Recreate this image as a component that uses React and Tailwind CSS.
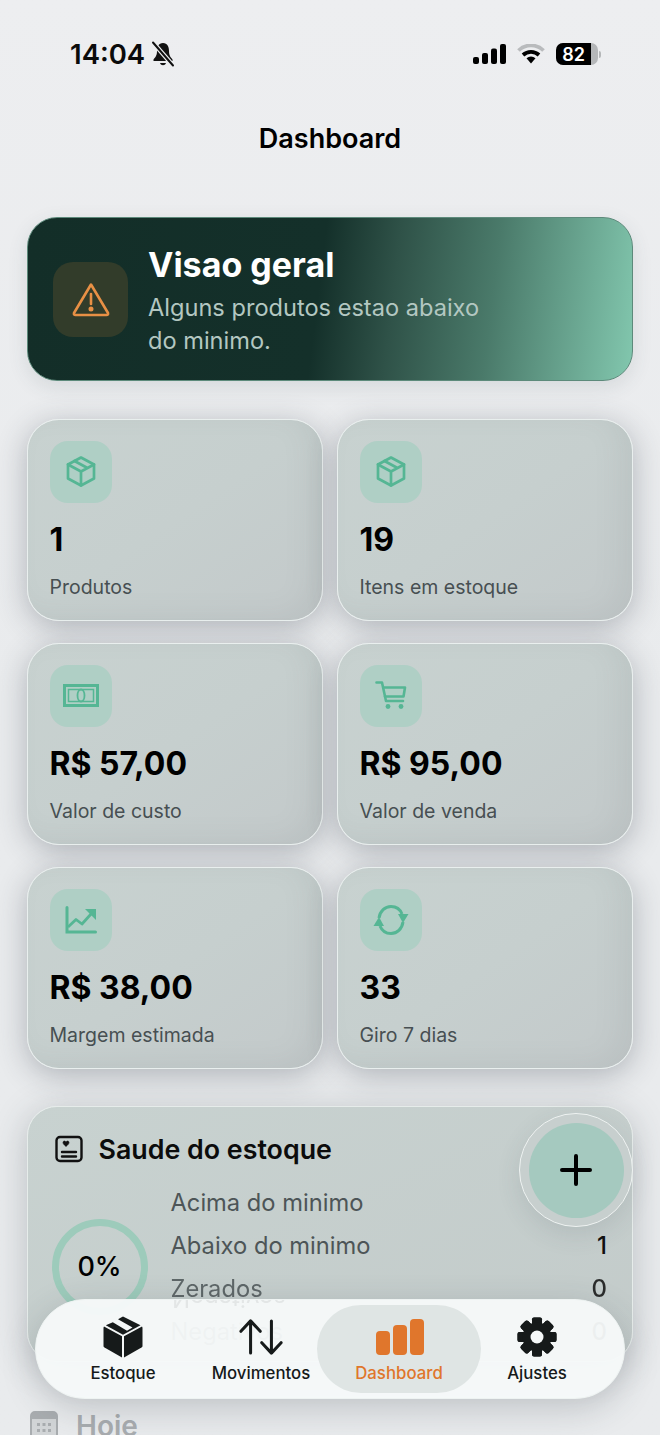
import React from "react";

const G = "#55b694";

function BoxOutline() {
  return (
    <svg width="32" height="33" viewBox="0 0 32 32" fill="none" stroke={G} strokeWidth="2.700" strokeLinejoin="round" strokeLinecap="round">
      <path d="M16 2 L29 9 V23 L16 30 L3 23 V9 Z" />
      <path d="M3 9 L16 16 L29 9 M16 16 V30 M9.500 5.500 L22.500 12.500" />
    </svg>
  );
}
function Money() {
  return (
    <svg width="36" height="23" viewBox="0 0 36 23" fill="none" stroke={G}>
      <rect x="1.500" y="1.500" width="33" height="20" strokeWidth="3" />
      <rect x="5.500" y="5.500" width="25" height="12" strokeWidth="1.500" />
      <ellipse cx="18" cy="11.500" rx="3.500" ry="6" strokeWidth="1.800" />
    </svg>
  );
}
function Cart() {
  return (
    <svg width="32" height="29" viewBox="0 0 32 29" fill="none" stroke={G} strokeWidth="2.600" strokeLinecap="round" strokeLinejoin="round">
      <path d="M1.500 1.500 H7 L11 20 H28" />
      <path d="M8.500 6.500 H30 L28.500 15.500 H10" />
      <circle cx="13" cy="25.500" r="2.400" fill={G} stroke="none" />
      <circle cx="26" cy="25.500" r="2.400" fill={G} stroke="none" />
    </svg>
  );
}
function Chart() {
  return (
    <svg width="32" height="28" viewBox="0 0 32 28" fill="none">
      <path d="M2 1.500 V26 H30.500" stroke={G} strokeWidth="3" strokeLinecap="round" />
      <path d="M3 21 L11 13.500 L17 18 L26 8" stroke={G} strokeWidth="2.800" strokeLinejoin="round" />
      <path d="M20 3 H31 V14 Z" fill={G} />
    </svg>
  );
}
function Sync() {
  return (
    <svg width="36" height="32" viewBox="0 0 36 32" fill="none">
      <path d="M6 14 C7 7 12 2.500 18 2.500 C23 2.500 27 5 29 10" stroke={G} strokeWidth="3" />
      <path d="M30 18 C29 25 24 29.500 18 29.500 C13 29.500 9 27 7 22" stroke={G} strokeWidth="3" />
      <path d="M25 10 H35.500 L30 19 Z" fill={G} />
      <path d="M0.500 22 H11 L6 13 Z" fill={G} />
    </svg>
  );
}
function Warn() {
  return (
    <svg width="38" height="35" viewBox="0 0 38 35" fill="none" stroke="#e89045" strokeWidth="2.600" strokeLinecap="round" strokeLinejoin="round">
      <path d="M19 2.500 L36 31 Q36.500 33 34.500 33 H3.500 Q1.500 33 2 31 Z" />
      <path d="M19 12 V22" />
      <circle cx="19" cy="27" r="1.200" fill="#e89045" />
    </svg>
  );
}
function BellOff() {
  return (
    <svg width="24" height="26" viewBox="0 0 24 26" fill="none">
      <path d="M12 2 C7.500 2 6 6 6 10 C6 14.500 4.500 16 2.500 18.500 V20 H21.500 V18.500 C19.500 16 18 14.500 18 10 C18 6 16.500 2 12 2 Z" fill="#111" />
      <path d="M9 22 C10 25 14 25 15 22 Z" fill="#111" />
      <path d="M2 1.500 L22 24.500" stroke="#eceef0" strokeWidth="4.500" />
      <path d="M2 1.500 L22 24.500" stroke="#111" strokeWidth="2" strokeLinecap="round" />
    </svg>
  );
}
function Signal() {
  return (
    <svg width="33" height="20" viewBox="0 0 33 20" fill="#000">
      <rect x="0" y="13" width="6" height="7" rx="2" />
      <rect x="9" y="9" width="6" height="11" rx="2" />
      <rect x="18" y="4.500" width="6" height="15.500" rx="2" />
      <rect x="27" y="0" width="6" height="20" rx="2" />
    </svg>
  );
}
function Wifi() {
  return (
    <svg width="28" height="20" viewBox="0 0 28 20" fill="none">
      <path d="M1.500 6.500 A18 18 0 0 1 26.500 6.500" stroke="#b9bbbd" strokeWidth="3.800" />
      <path d="M6 11 A12 12 0 0 1 22 11" stroke="#000" strokeWidth="3.800" />
      <path d="M9.500 14.200 A7 7 0 0 1 18.500 14.200 L14 19.500 Z" fill="#000" />
    </svg>
  );
}
function Report() {
  return (
    <svg width="28" height="28" viewBox="0 0 28 28" fill="none" stroke="#111" strokeWidth="2.400" strokeLinecap="round">
      <rect x="1.500" y="2" width="25" height="24" rx="3.500" />
      <path d="M7 17 H21 M7 21.500 H21" />
      <path d="M11 7.500 C11 5.500 8 5.500 8 7.500 C8 9 9.500 10.200 11 11.500 C12.500 10.200 14 9 14 7.500 C14 5.500 11 5.500 11 7.500 Z" fill="#111" strokeWidth="0.600" />
    </svg>
  );
}
function BoxFilled() {
  return (
    <svg width="40" height="42" viewBox="0 0 40 42" fill="#161a1a">
      <path d="M19 20.300 L1 10.500 Q0.500 11 0.500 12 V30 Q0.500 31 1.500 31.500 L19 41.500 Z" />
      <path d="M21 20.300 L39 10.500 Q39.500 11 39.500 12 V30 Q39.500 31 38.500 31.500 L21 41.500 Z" />
      <path d="M20 0.500 Q19.500 0.500 19 1 L15 3.200 L29.500 11.500 L24 14.800 L9.800 6.200 L2.800 9.300 L20 18.700 L37.500 9.300 L21 1 Q20.500 0.500 20 0.500 Z" />
    </svg>
  );
}
function Arrows() {
  return (
    <svg width="46" height="36" viewBox="0 0 46 38" fill="none" stroke="#161a1a" strokeWidth="3.200" strokeLinecap="round" strokeLinejoin="round">
      <path d="M12 36 V2 M1.800 13 L12 2 L22.200 13" />
      <path d="M34 2 V36 M23.800 25 L34 36 L44.200 25" />
    </svg>
  );
}
function Gear() {
  const teeth = [0, 45, 90, 135, 180, 225, 270, 315];
  return (
    <svg width="40" height="40" viewBox="0 0 40 40">
      {teeth.map((a) => (
        <rect key={a} x="15" y="0.500" width="10" height="39" rx="2" fill="#161a1a" transform={`rotate(${a} 20 20)`} />
      ))}
      <circle cx="20" cy="20" r="14.500" fill="#161a1a" />
      <circle cx="20" cy="20" r="6.500" fill="#f5f8f8" />
    </svg>
  );
}
function Calendar() {
  return (
    <svg width="28" height="30" viewBox="0 0 28 30" fill="none">
      <rect x="1" y="1" width="26" height="28" rx="4" fill="#d2d5d7" stroke="#a9adb0" strokeWidth="2" />
      <path d="M1 5 Q1 1 5 1 H23 Q27 1 27 5 V8 H1 Z" fill="#a9adb0" />
      <g fill="#a9adb0">
        <rect x="7" y="12" width="3" height="3" /><rect x="12.500" y="12" width="3" height="3" /><rect x="18" y="12" width="3" height="3" />
        <rect x="7" y="18" width="3" height="3" /><rect x="12.500" y="18" width="3" height="3" /><rect x="18" y="18" width="3" height="3" />
      </g>
    </svg>
  );
}

function Stat({ icon, value, label }) {
  return (
    <div className="h-[202px] rounded-[32px] border-[1.5px] border-[#e9efee] bg-gradient-to-br from-[#c8d2d0] via-[#c6cfce] to-[#c3c9ca] pl-[21.500px] pt-[20.500px] shadow-[0_6px_30px_rgba(50,60,70,0.32),inset_-14px_-6px_24px_rgba(120,130,130,0.10)]">
      <div className="flex h-[62px] w-[62px] items-center justify-center rounded-[18px] bg-[#afcfc5]">{icon}</div>
      <div className="mt-[17px] text-[32px] font-bold leading-[40px] text-black">{value}</div>
      <div className="mt-[14px] text-[19.500px] leading-[26px] text-[#474f52]">{label}</div>
    </div>
  );
}

function Row({ label, value, cls = "" }) {
  return (
    <div className="flex h-[43px] items-center justify-between">
      <span className={`text-[23.700px] text-[#4d5557] ${cls}`}>{label}</span>
      <span className={`text-[24px] font-medium text-[#111] ${cls}`}>{value}</span>
    </div>
  );
}

function NavItem({ icon, label, active }) {
  return (
    <div className="relative flex w-[138px] flex-col items-center">
      <div className="flex h-[44px] items-center justify-center pt-[2px]">{icon}</div>
      <span className={`mt-[4px] text-[16.800px] font-medium leading-[22px] ${active ? "text-[#e0762c]" : "text-[#161a1a]"}`}>{label}</span>
    </div>
  );
}

export default function App() {
  return (
    <div className="relative h-[1435px] w-[660px] overflow-hidden bg-gradient-to-b from-[#edeef0] via-[#e9ebed] to-[#e9ebed] font-['Inter',sans-serif]">
      <div className="flex h-[108px] items-start justify-between pl-[70px] pr-[59px] pt-[36px]">
        <div className="flex items-center gap-[6px]">
          <span className="text-[27.500px] font-semibold leading-[36px] text-[#0b0b0b]">14:04</span>
          <BellOff />
        </div>
        <div className="flex items-center gap-[11px] pt-[7px]">
          <Signal />
          <Wifi />
          <div className="flex items-center gap-[1px]">
            <div className="flex h-[22px] w-[42px] items-center overflow-hidden rounded-[7px] bg-[#b5b7b9]">
              <div className="flex h-full w-[35px] items-center justify-center bg-black text-[18px] font-semibold text-white">82</div>
            </div>
            <div className="h-[7px] w-[2px] rounded-r-full bg-[#b5b7b9]" />
          </div>
        </div>
      </div>

      <div className="text-center text-[27px] font-semibold leading-[62px] text-black">Dashboard</div>

      <div className="mx-[27px] mt-[47px] flex h-[164px] items-center gap-[20px] rounded-[30px] border border-[#5d8a7b] bg-[linear-gradient(97deg,#132e28_0%,#14302a_48%,#2f5248_60%,#4a7a6a_76%,#82c7ae_100%)] pl-[25px] shadow-[0_6px_20px_rgba(60,70,80,0.12)]">
        <div className="flex h-[75px] w-[75px] items-center justify-center rounded-[20px] bg-[#323c2a]">
          <Warn />
        </div>
        <div className="w-[350px] pt-[3px]">
          <div className="text-[34px] font-bold leading-[42px] text-white">Visao geral</div>
          <div className="mt-[5px] text-[23.600px] leading-[33px] text-[#b3c7c1]">Alguns produtos estao abaixo do minimo.</div>
        </div>
      </div>

      <div className="mx-[27px] mt-[38px] grid grid-cols-[295.500px_296px] gap-x-[14.500px] gap-y-[22px]">
        <Stat icon={<BoxOutline />} value="1" label="Produtos" />
        <Stat icon={<BoxOutline />} value="19" label="Itens em estoque" />
        <Stat icon={<Money />} value="R$ 57,00" label="Valor de custo" />
        <Stat icon={<Cart />} value="R$ 95,00" label="Valor de venda" />
        <Stat icon={<Chart />} value="R$ 38,00" label="Margem estimada" />
        <Stat icon={<Sync />} value="33" label="Giro 7 dias" />
      </div>

      <div className="mx-[27px] mt-[37px] h-[256px] rounded-[30px] border-[1.5px] border-[#e6ecea] bg-gradient-to-br from-[#c8d2d0] to-[#c3cbca] pl-[23.500px] pr-[25px] pt-[22px] shadow-[0_6px_34px_rgba(50,60,70,0.26)]">
        <div className="flex items-center gap-[16px] pl-[3px]">
          <Report />
          <span className="text-[26.800px] font-semibold leading-[40px] text-[#0c0c0c]">Saude do estoque</span>
        </div>
        <div className="mt-[12px] flex gap-[23px]">
          <div className="mt-[38px] flex h-[96px] w-[96px] shrink-0 items-center justify-center rounded-full border-[7px] border-[#9dcbbb] text-[27px] font-medium text-black">0%</div>
          <div className="flex-1">
            <Row label="Acima do minimo" value="" />
            <Row label="Abaixo do minimo" value="1" />
            <Row label="Zerados" value="0" cls="opacity-85" />
            <Row label="Negativos" value="0" />
          </div>
        </div>
      </div>

      <div className="ml-[30px] mt-[49px] flex items-center gap-[18px]">
        <Calendar />
        <span className="text-[28px] font-semibold leading-[30px] text-[#a9adb0]">Hoje</span>
      </div>

      <div className="absolute left-[519px] top-[1113px] flex h-[114px] w-[114px] items-center justify-center rounded-full border-[1.5px] border-[#eef2f1] bg-[#c7cfce] shadow-[0_8px_24px_rgba(60,70,80,0.12)]">
        <div className="flex h-[95px] w-[95px] items-center justify-center rounded-full bg-[#a5c9bf]">
          <svg width="32" height="32" viewBox="0 0 32 32" stroke="#000" strokeWidth="4" strokeLinecap="round">
            <path d="M16 2 V30 M2 16 H30" />
          </svg>
        </div>
      </div>

      <div className="absolute left-[35px] top-[1299px] flex h-[100px] w-[590px] items-center justify-center overflow-hidden rounded-[50px] border border-[#eef3f2] bg-[#f6f9f9]/96">
        <div className="absolute left-[136px] top-[-20px] -scale-y-100 text-[24px] text-[#4d5557]/10 blur-[0.5px]">Negativos</div>
        <div className="absolute left-[281px] top-[5px] h-[88px] w-[164px] rounded-[44px] bg-[#dfe5e4]" />
        <NavItem icon={<BoxFilled />} label="Estoque" />
        <NavItem icon={<Arrows />} label="Movimentos" />
        <NavItem
          active
          label="Dashboard"
          icon={
            <div className="ml-[1px] flex h-[36px] items-end gap-[3px]">
              <div className="h-[24px] w-[14px] rounded-[4px] bg-[#e0762c]" />
              <div className="h-[30px] w-[14px] rounded-[4px] bg-[#e0762c]" />
              <div className="h-[36px] w-[14px] rounded-[4px] bg-[#e0762c]" />
            </div>
          }
        />
        <NavItem icon={<Gear />} label="Ajustes" />
      </div>
      <div className="pointer-events-none absolute left-[35px] top-[1299px] h-[100px] w-[590px] rounded-[50px] shadow-[0_10px_34px_rgba(50,60,70,0.22)]" />
    </div>
  );
}
